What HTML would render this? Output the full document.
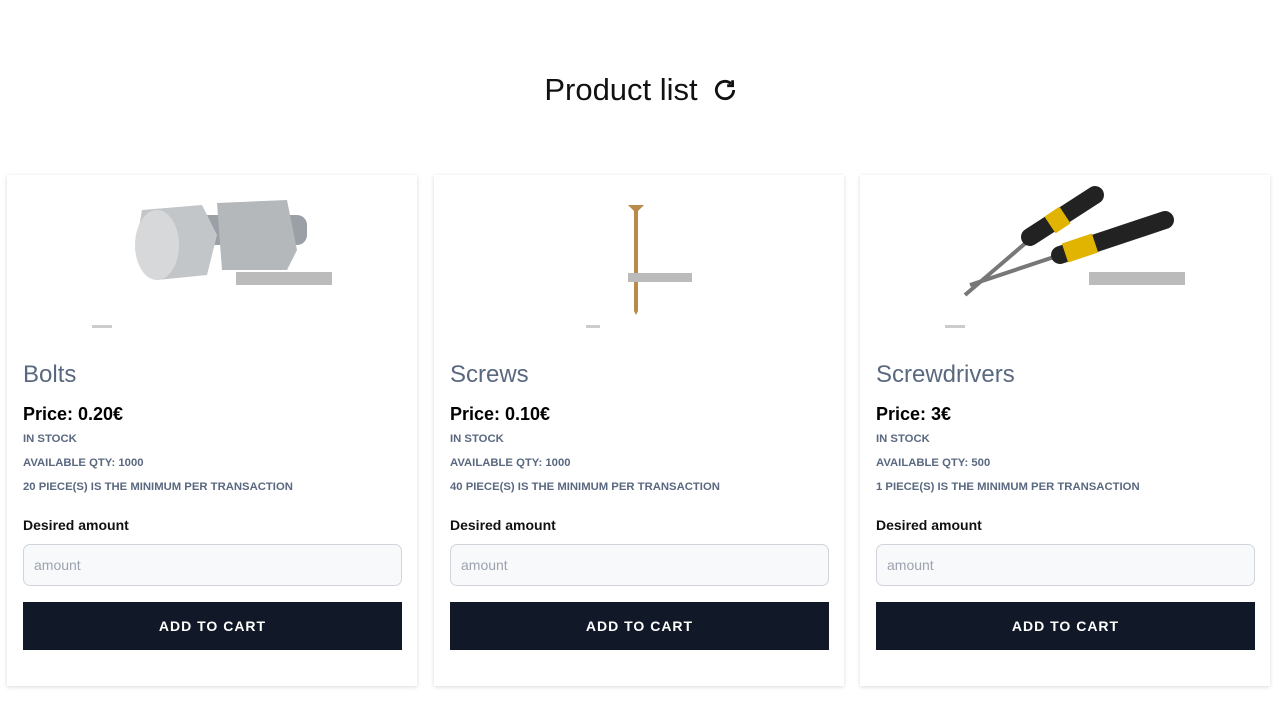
<!DOCTYPE html>
<html><head><meta charset="utf-8"><style>
*{box-sizing:border-box;margin:0;padding:0}
body{width:1286px;height:706px;background:#fff;font-family:"Liberation Sans","DejaVu Sans",sans-serif;position:relative;overflow:hidden}
h1{position:absolute;top:72px;left:0;width:1286px;text-align:center;font-weight:400;font-size:31px;color:#111;padding-right:4px}
h1 svg{vertical-align:-3px;margin-left:14px}
.card{position:absolute;top:175px;width:410px;height:511px;background:#fff;box-shadow:0 1px 4px rgba(0,0,0,.15)}
.img{position:absolute;left:0;top:0;width:410px;height:160px}
.name{position:absolute;left:16px;top:186px;font-size:24px;color:#5a6880}
.price{position:absolute;left:16px;top:229px;font-size:18px;font-weight:bold;color:#000}
.s{position:absolute;left:16px;font-size:11.3px;font-weight:bold;color:#5a6880}
.lab{position:absolute;left:16px;top:342px;font-size:14px;font-weight:bold;color:#111}
.inp{position:absolute;left:16px;top:369px;width:379px;height:42px;border:1px solid #d1d5db;border-radius:7px;background:#f8f9fb;font-size:14px;color:#9ca3af;padding:12px 10px}
.btn{position:absolute;left:16px;top:427px;width:379px;height:48px;background:#111827;color:#fff;font-size:14px;font-weight:bold;letter-spacing:1px;text-align:center;line-height:48px}
.wm{position:absolute;height:13px;background:#bbb}
</style></head><body>
<h1>Product list<svg width="26" height="26" viewBox="0 0 24 24" fill="none" stroke="#111" stroke-width="2.6"><path d="M20 12a8 8 0 1 1-2.5-5.8"/><path d="M19 3v5h-5" stroke-linejoin="miter"/></svg></h1>

<div class="card" style="left:7px">
<svg class="img" viewBox="0 0 410 160"><rect x="85" y="150" width="20" height="3" fill="#ccc"/>
<rect x="190" y="40" width="110" height="30" rx="10" fill="#9aa0a6"/><polygon points="210,28 280,25 290,75 280,95 215,95" fill="#b5b8bb"/><polygon points="135,35 195,30 210,60 200,100 150,105 128,75" fill="#c3c6c9"/><ellipse cx="150" cy="70" rx="22" ry="35" fill="#d6d8da"/></svg>
<div class="wm" style="left:229px;top:97px;width:96px"></div>
<div class="name">Bolts</div><div class="price">Price: 0.20€</div>
<div class="s" style="top:258px">IN STOCK</div><div class="s" style="top:282px">AVAILABLE QTY: 1000</div><div class="s" style="top:306px">20 PIECE(S) IS THE MINIMUM PER TRANSACTION</div>
<div class="lab">Desired amount</div><div class="inp">amount</div><div class="btn">ADD TO CART</div></div>

<div class="card" style="left:434px">
<svg class="img" viewBox="0 0 410 160"><rect x="152" y="150" width="14" height="3" fill="#ccc"/>
<path d="M194 30h16l-6 6v100l-2 4-2-4V36z" fill="#b98a4a"/></svg>
<div class="wm" style="left:194px;top:98px;width:64px;height:9px"></div>
<div class="name">Screws</div><div class="price">Price: 0.10€</div>
<div class="s" style="top:258px">IN STOCK</div><div class="s" style="top:282px">AVAILABLE QTY: 1000</div><div class="s" style="top:306px">40 PIECE(S) IS THE MINIMUM PER TRANSACTION</div>
<div class="lab">Desired amount</div><div class="inp">amount</div><div class="btn">ADD TO CART</div></div>

<div class="card" style="left:860px">
<svg class="img" viewBox="0 0 410 160"><rect x="85" y="150" width="20" height="3" fill="#ccc"/>
<path d="M105 120L175 60" stroke="#777" stroke-width="4"/><path d="M170 62L235 20" stroke="#222" stroke-width="18" stroke-linecap="round"/><path d="M190 50L205 40" stroke="#e0b400" stroke-width="20"/>
<path d="M110 110L200 80" stroke="#777" stroke-width="4"/><path d="M200 80L305 45" stroke="#222" stroke-width="18" stroke-linecap="round"/><path d="M205 78L235 68" stroke="#e0b400" stroke-width="20"/></svg>
<div class="wm" style="left:229px;top:97px;width:96px"></div>
<div class="name">Screwdrivers</div><div class="price">Price: 3€</div>
<div class="s" style="top:258px">IN STOCK</div><div class="s" style="top:282px">AVAILABLE QTY: 500</div><div class="s" style="top:306px">1 PIECE(S) IS THE MINIMUM PER TRANSACTION</div>
<div class="lab">Desired amount</div><div class="inp">amount</div><div class="btn">ADD TO CART</div></div>
</body></html>
